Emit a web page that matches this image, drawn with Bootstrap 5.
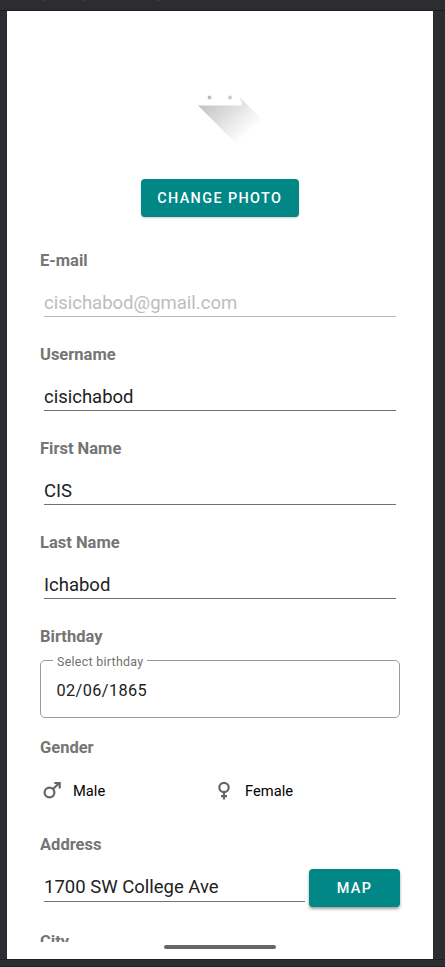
<!DOCTYPE html>
<html lang="en">
<head>
<meta charset="utf-8">
<meta name="viewport" content="width=device-width, initial-scale=1">
<title>Edit profile</title>
<link href="https://cdn.jsdelivr.net/npm/bootstrap@5.3.0/dist/css/bootstrap.min.css" rel="stylesheet">
<script src="https://cdn.jsdelivr.net/npm/bootstrap@5.3.0/dist/js/bootstrap.bundle.min.js" defer></script>
<style>
  body { background: #2c2d31; font-family: Roboto, "Liberation Sans", sans-serif; height: 967px; }
  .topstrip { height: 11px; border-bottom: 1px solid #1d1c20; }
  .tick { width: 1px; height: 1px; background: #55565a; }
  .device { width: 426px; height: 948px; margin-left: 7px; }
  .bottomstrip { height: 8px; border-top: 1px solid #1d1e21; border-bottom: 1px solid #222327; }
  .scroller { height: 931px; padding: 74px 33px 0; }
  .avatar { width: 90px; height: 80px; margin: 0 auto; }
  .btn-teal, .btn-teal:hover { background: #018786; color: #fff; border: 0; border-radius: 4px; height: 38px; padding: 1px 0 0; font-weight: 500; font-size: 14.4px; letter-spacing: 1.4px; line-height: 38px; box-shadow: 0 1px 2px rgba(0,0,0,.2); }
  .photo-btn { width: 157.5px; margin: 14px 0 0 101px; }
  .map-btn { width: 91px; box-shadow: 0 2px 3px rgba(0,0,0,.38); }
  .field-name { color: #757575; font-weight: 700; font-size: 16.5px; line-height: 20px; height: 20px; margin: 0; display: block; }
  .drop { padding-top: 1px; }
  .field-block { height: 94px; }
  .line-input { border: 0; border-bottom: 1px solid #707070; border-radius: 0; background: transparent; color: #212121; font-size: 18.5px; line-height: 24px; height: 47px; padding: 21px 0 1px; margin: 0 4px; width: 352px; }
  .line-input:disabled { background: transparent; color: #bdbdbd; border-color: #b9b9b9; opacity: 1; }
  .addr-input { width: 261px; height: 33px; padding: 6px 0 2px; border-bottom-color: #757575; }
  .outlined { height: 58px; border: 1px solid #9b9b9b; border-radius: 5px; margin: 14px 0 0; padding: 0 12px; }
  .outlined legend { float: none; width: auto; font-size: 12.4px; line-height: 16px; height: 16px; letter-spacing: .3px; color: #717171; padding: 0 4px; margin: -7px 0 0; background: #fff; display: table; }
  .date-value { font-size: 16.3px; letter-spacing: .4px; line-height: 20px; color: #212121; margin: 11px 0 0 3.5px; }
  .opt { font-size: 14.7px; line-height: 20px; color: #000; }
  .homebar { width: 112px; height: 4px; background: #666; border-radius: 2px; margin: 3px 0 0 157px; }
</style>
</head>
<body class="overflow-hidden">
<div class="topstrip d-flex">
  <span class="tick" style="margin-left:43px"></span><span class="tick" style="margin-left:40px"></span><span class="tick" style="margin-left:73px"></span>
</div>
<main class="device bg-white overflow-hidden">
  <form class="scroller overflow-hidden">
    <svg class="avatar d-block" viewBox="175 85 90 80" aria-hidden="true">
      <defs>
        <linearGradient id="fade" gradientUnits="userSpaceOnUse" x1="213" y1="93" x2="250" y2="132">
          <stop offset="0" stop-color="#c2c2c2"/><stop offset="1" stop-color="#fff"/>
        </linearGradient>
      </defs>
      <path d="M198 105.500H241.800V102.500L239.500 97L264 121.500L240 147.500Z" fill="url(#fade)"/>
      <circle cx="209.500" cy="97.500" r="1.900" fill="#bdbdbd"/>
      <circle cx="230" cy="97.500" r="2" fill="#cbcbcb"/>
    </svg>
    <button type="button" class="btn btn-teal photo-btn d-block">CHANGE PHOTO</button>

    <div class="field-block" style="margin-top:33px">
      <label class="field-name drop" for="email">E-mail</label>
      <input class="form-control line-input" id="email" value="cisichabod@gmail.com" disabled>
    </div>
    <div class="field-block">
      <label class="field-name drop" for="user">Username</label>
      <input class="form-control line-input" id="user" value="cisichabod">
    </div>
    <div class="field-block">
      <label class="field-name drop" for="first">First Name</label>
      <input class="form-control line-input" id="first" value="CIS">
    </div>
    <div class="field-block">
      <label class="field-name drop" for="last">Last Name</label>
      <input class="form-control line-input" id="last" value="Ichabod">
    </div>

    <span class="field-name drop">Birthday</span>
    <div class="outlined">
      <legend>Select birthday</legend>
      <div class="date-value">02/06/1865</div>
    </div>

    <span class="field-name drop" style="margin-top:19px">Gender</span>
    <div class="d-flex" style="margin-top:24px">
      <div class="opt d-flex align-items-center" style="width:172px">
        <svg width="24" height="20" viewBox="40 781 24 20" fill="none" stroke="#666" stroke-width="2.200" aria-hidden="true"><circle cx="49.500" cy="792.500" r="4.900"/><path d="M53 789L59.500 782.800M54.300 783H59.700V788.400"/></svg>
        <span style="margin-left:9px">Male</span>
      </div>
      <div class="opt d-flex align-items-center">
        <svg width="24" height="20" viewBox="212 781 24 20" fill="none" stroke="#666" stroke-width="2.200" aria-hidden="true"><circle cx="224" cy="787.500" r="4.700"/><path d="M224 792V799.500M221 796.200H227"/></svg>
        <span style="margin-left:9px">Female</span>
      </div>
    </div>

    <label class="field-name" for="addr" style="margin-top:34px">Address</label>
    <div class="d-flex" style="margin-top:14px">
      <input class="form-control line-input addr-input flex-shrink-0" id="addr" value="1700 SW College Ave">
      <button type="button" class="btn btn-teal map-btn">MAP</button>
    </div>
    <span class="field-name" style="margin-top:25px">City</span>
  </form>
  <div class="homebar"></div>
</main>
<div class="bottomstrip"></div>
</body>
</html>
